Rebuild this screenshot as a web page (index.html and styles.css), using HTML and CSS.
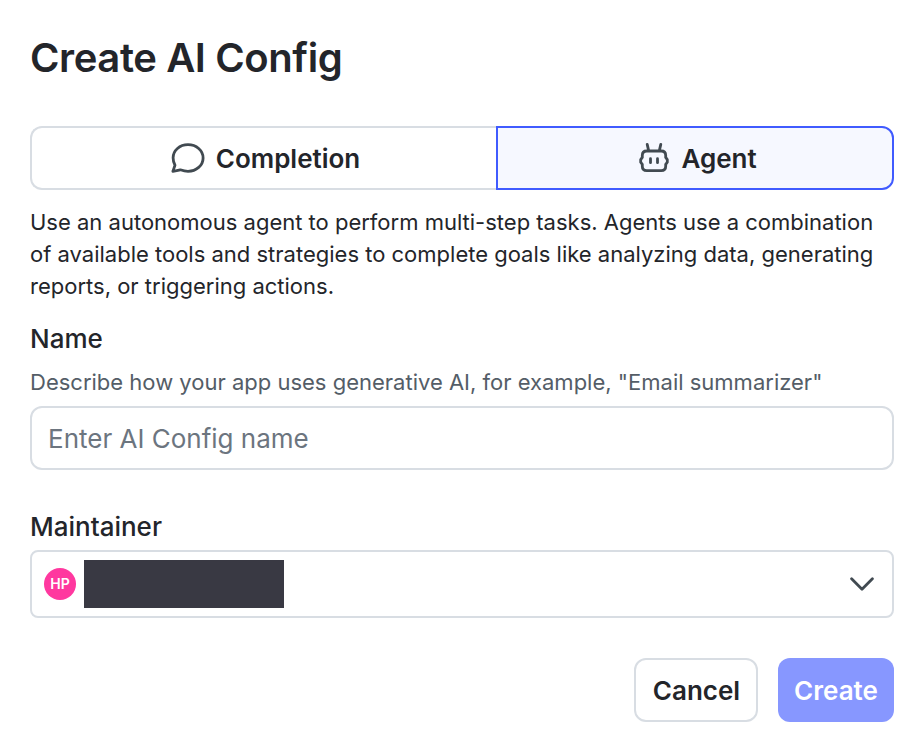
FILE: index.html
```html
<!DOCTYPE html>
<html lang="en">
<head>
<meta charset="utf-8">
<title>Create AI Config</title>
<link rel="stylesheet" href="styles.css">
</head>
<body>
<main class="dialog">
  <h1 class="title">Create AI Config</h1>
  <div class="modes">
    <button class="mode mode-completion">
      <svg class="icon-chat" viewBox="0.6 0 36 36"><path d="M3.5 31.3C4.3 29.2 5 27.2 5.6 25.2 4.3 23 3.7 20.5 3.7 17.8 3.7 10.4 10.3 4.6 18.6 4.6S33.7 10.4 33.7 17.9 26.9 31.3 18.6 31.3C15.8 31.3 13.2 30.6 10.9 29.8 8.5 30.4 6 30.9 3.5 31.3Z"/></svg>
      <span>Completion</span>
    </button>
    <button class="mode mode-agent">
      <svg class="icon-bot" viewBox="0 0 32 32"><path d="M8.8 9H23.2Q27.7 9 27.7 13.4V15.4L29.3 17.6V20.2L27.7 22.4V24.2Q27.7 28.6 23.2 28.6H8.8Q4.3 28.6 4.3 24.2V22.4L2.7 20.2V17.6L4.3 15.4V13.4Q4.3 9 8.8 9ZM10.6 8.4 9.2 2.4M21.4 8.4 22.8 2.4M12.5 16.7V20.7M19.5 16.7V20.7"/></svg>
      <span>Agent</span>
    </button>
  </div>
  <p class="about">Use an autonomous agent to perform multi-step tasks. Agents use a combination of available tools and strategies to complete goals like analyzing data, generating reports, or triggering actions.</p>
  <label class="label" for="name">Name</label>
  <p class="hint">Describe how your app uses generative AI, for example, "Email summarizer"</p>
  <input class="field" id="name" placeholder="Enter AI Config name">
  <div class="label label-maintainer">Maintainer</div>
  <div class="select">
    <span class="avatar">HP</span>
    <span class="member"></span>
    <svg class="chevron" viewBox="0 0 24 14"><path d="M1.6 1.8 12 12.2 22.4 1.8"/></svg>
  </div>
  <div class="actions">
    <button class="button cancel">Cancel</button>
    <button class="button create">Create</button>
  </div>
</main>
</body>
</html>
```
FILE: styles.css
```css
* { box-sizing: border-box; }
body { margin: 0; background: #fff; color: #23252a; font-family: Inter, sans-serif; }
button, input { font-family: inherit; color: inherit; margin: 0; }
svg { fill: none; flex: none; stroke: #414a51; stroke-linecap: round; stroke-linejoin: round; }
.dialog { width: 924px; height: 752px; padding: 34px 30px 30px; overflow: hidden; }
.title { margin: 0 0 44px; font-size: 40px; line-height: 48px; font-weight: 600; letter-spacing: -0.4px; }
.modes { display: flex; height: 64px; }
.mode { display: flex; align-items: center; justify-content: center; padding: 0; border: 2px solid #d8dde3; background: #fff; font-size: 26px; font-weight: 600; }
.mode-completion { gap: 10px; width: 466px; padding-left: 2px; border-right: 0; border-radius: 12px 0 0 12px; }
.mode-agent { gap: 11px; flex: 1; padding-left: 5px; border-color: #405bff; background: #f6f8ff; border-radius: 0 12px 12px 0; }
.icon-chat { width: 36px; height: 36px; stroke-width: 2.8; }
.icon-bot { width: 32px; height: 32px; stroke-width: 2.8; }
.about { margin: 16px 0 0; font-size: 22px; line-height: 32px; }
.label { display: block; margin-top: 21px; font-size: 26px; line-height: 32px; font-weight: 500; }
.hint { margin: 11px 0 8px; font-size: 22px; line-height: 32px; color: #545d67; }
.field { display: block; width: 100%; height: 64px; padding: 0 16px; border: 2px solid #d8dde3; border-radius: 12px; background: #fff; font-size: 26px; }
.field::placeholder { color: #6c757f; opacity: 1; }
.label-maintainer { margin-top: 41px; }
.select { display: flex; align-items: center; height: 68px; margin-top: 7px; padding: 0 18px 0 12px; border: 2px solid #d8dde3; border-radius: 8px; }
.avatar { width: 32px; height: 32px; border-radius: 50%; background: #ff389f; color: #fff; font-size: 14px; font-weight: 600; line-height: 32px; text-align: center; }
.member { width: 200px; height: 48px; margin-left: 8px; background: #393943; }
.chevron { width: 24px; height: 14px; margin-left: auto; stroke-width: 2.8; }
.actions { display: flex; justify-content: flex-end; gap: 20px; margin-top: 40px; }
.button { height: 64px; padding: 0; border: 0; border-radius: 12px; font-size: 26px; font-weight: 600; }
.cancel { width: 124px; padding-left: 1px; border: 2px solid #d8dde3; background: #fff; }
.create { width: 116px; background: #8797ff; color: #fff; }
```
